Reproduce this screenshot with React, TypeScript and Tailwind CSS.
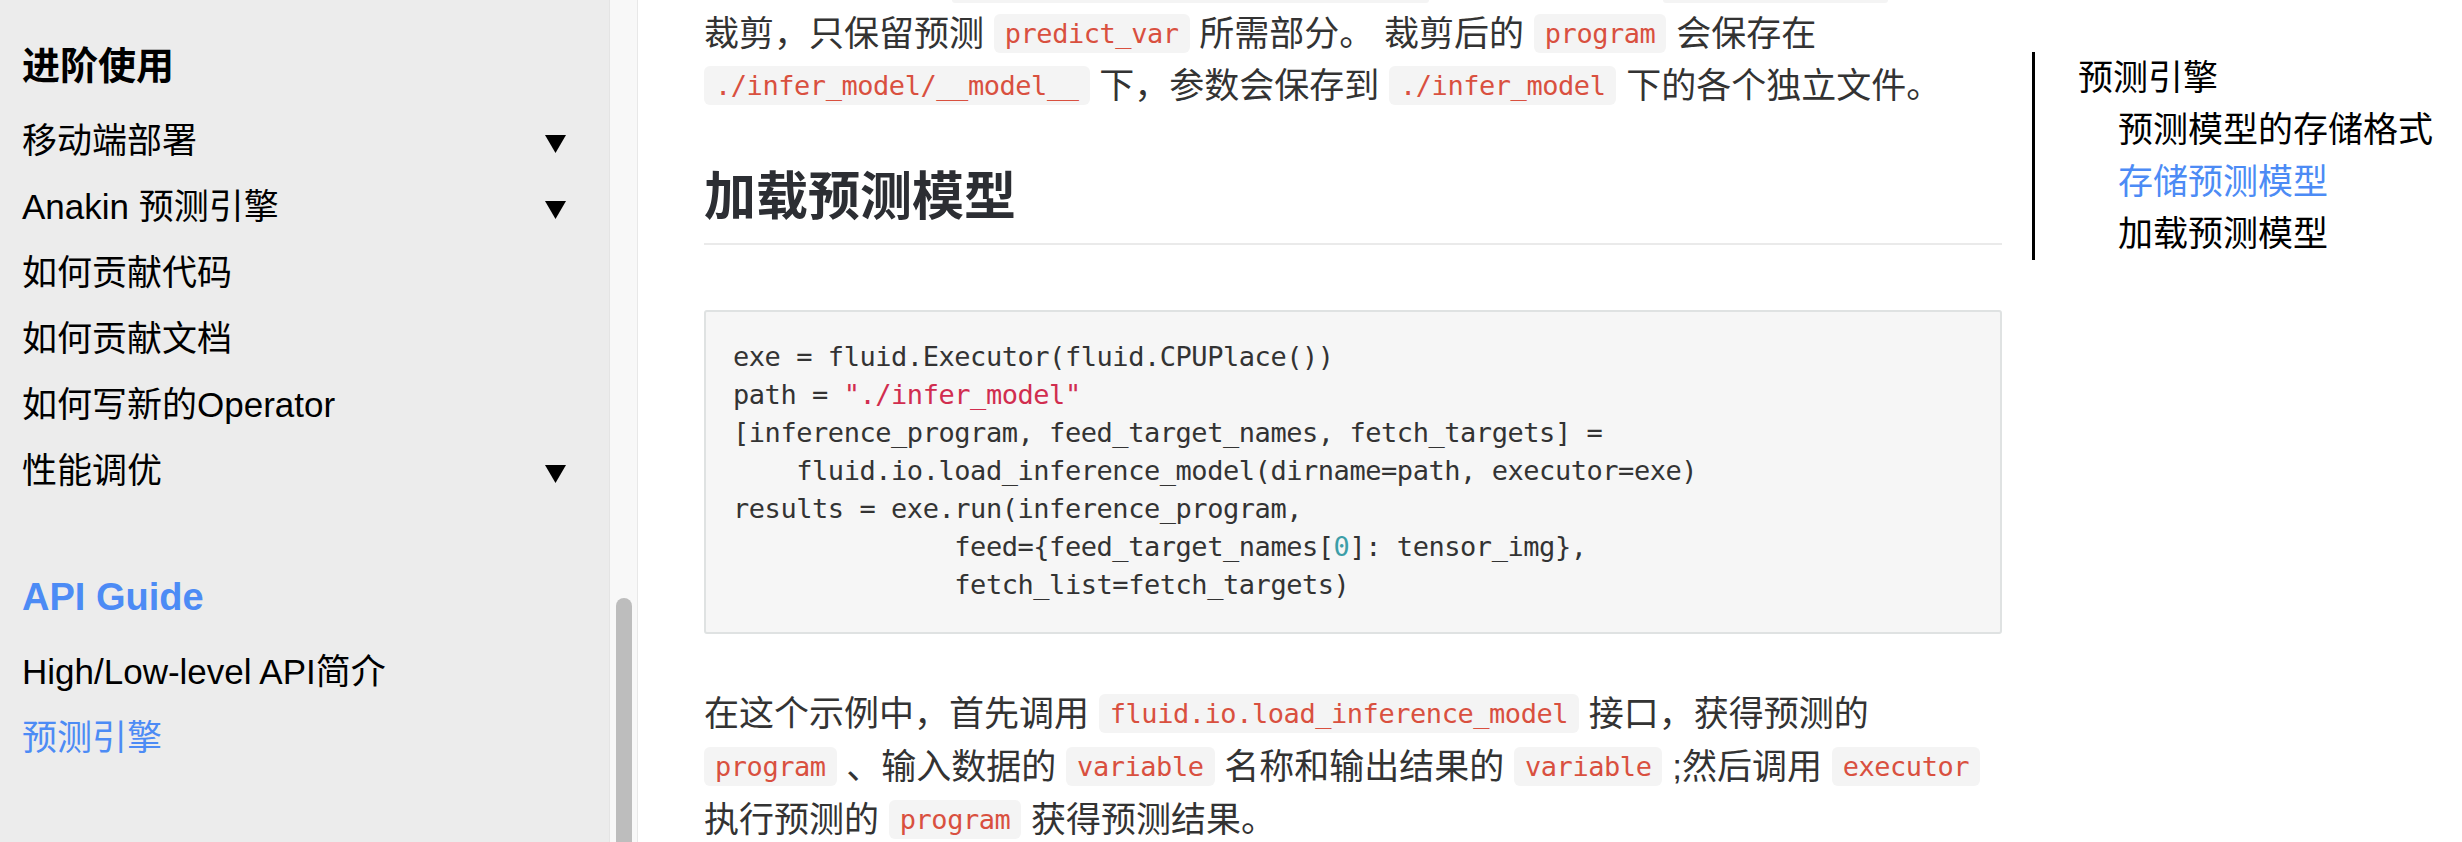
import React from "react";

const Code = ({ children }: { children: React.ReactNode }) => (
  <code className="inline-block rounded-[6px] bg-[#f4f4f4] px-[11px] align-[3px] font-['DejaVu_Sans_Mono',monospace] text-[27px] leading-[39px] tracking-[-0.45px] text-[#d9503f]">
    {children}
  </code>
);

const Arrow = () => (
  <svg width="21" height="18" viewBox="0 0 21 18" className="mt-[5px] shrink-0">
    <polygon points="0,0 21,0 10.5,18" fill="#000" />
  </svg>
);

const navItems: { label: string; arrow?: boolean }[] = [
  { label: "移动端部署", arrow: true },
  { label: "Anakin 预测引擎", arrow: true },
  { label: "如何贡献代码" },
  { label: "如何贡献文档" },
  { label: "如何写新的Operator" },
  { label: "性能调优", arrow: true },
];

export default function App() {
  return (
    <div className="flex h-[842px] w-[2462px] overflow-hidden bg-white font-['Liberation_Sans','Noto_Sans_CJK_SC',sans-serif]">
      {/* Sidebar */}
      <aside className="w-[610px] shrink-0 border-r border-[#e4e4e4] bg-[#ececec] pl-[22px] pr-[43px] pt-[40px] text-black">
        <div className="text-[38px] font-bold leading-[52px]">进阶使用</div>
        <ul className="mt-[16px]">
          {navItems.map((it) => (
            <li key={it.label} className="flex h-[66px] items-center justify-between text-[35px] leading-[66px]">
              <span>{it.label}</span>
              {it.arrow && <Arrow />}
            </li>
          ))}
        </ul>
        <div className="mt-[67px] text-[38px] font-bold leading-[52px] text-[#4c8bf5]">API Guide</div>
        <ul className="mt-[16px]">
          <li className="h-[66px] text-[35px] leading-[66px]">High/Low-level API简介</li>
          <li className="h-[66px] text-[35px] leading-[66px] text-[#4c8bf5]">预测引擎</li>
        </ul>
      </aside>

      {/* Sidebar scrollbar */}
      <div className="flex w-[28px] shrink-0 flex-col border-r border-[#e8e8e8] bg-[#f8f8f8] pl-[6px] pr-[5px] pt-[598px]">
        <div className="flex-1 rounded-t-full bg-[#bdbdbd]" />
      </div>

      {/* Main */}
      <main className="flex flex-1 pl-[66px]">
        <article className="w-[1298px] shrink-0 text-[35px] text-[#333]">
          {/* bottoms of code boxes from the previous (scrolled-off) line */}
          <div className="flex h-[3px]">
            <div className="ml-[248px] w-[477px] rounded-b-[6px] bg-[#f4f4f4]" />
            <div className="ml-[234px] w-[225px] rounded-b-[6px] bg-[#f4f4f4]" />
          </div>

          <div className="mt-[5px] leading-[52px]">
            <div className="whitespace-nowrap">
              裁剪，只保留预测 <Code>predict_var</Code> 所需部分。 裁剪后的 <Code>program</Code> 会保存在
            </div>
            <div className="whitespace-nowrap">
              <Code>./infer_model/__model__</Code> 下，参数会保存到 <Code>./infer_model</Code> 下的各个独立文件。
            </div>
          </div>

          <h2 className="mt-[55px] border-b-2 border-[#eaeaea] pb-[16px] text-[52px] font-bold leading-[60px] text-[#2c2e33]">
            加载预测模型
          </h2>

          <div className="mt-[65px] rounded-[3px] border-2 border-[#dfe2e2] bg-[#f6f6f6] pb-[28px] pl-[27px] pt-[26px]">
            <pre className="font-['DejaVu_Sans_Mono',monospace] text-[27px] leading-[38px] tracking-[-0.45px] text-[#333]">
              {"exe = fluid.Executor(fluid.CPUPlace())\npath = "}
              <span className="text-[#d12d4f]">"./infer_model"</span>
              {"\n[inference_program, feed_target_names, fetch_targets] =\n    fluid.io.load_inference_model(dirname=path, executor=exe)\nresults = exe.run(inference_program,\n              feed={feed_target_names["}
              <span className="text-[#3c9ea8]">0</span>
              {"]: tensor_img},\n              fetch_list=fetch_targets)"}
            </pre>
          </div>

          <div className="mt-[53px] leading-[53px]">
            <div className="whitespace-nowrap">
              在这个示例中，首先调用 <Code>fluid.io.load_inference_model</Code> 接口，获得预测的
            </div>
            <div className="whitespace-nowrap">
              <Code>program</Code> 、输入数据的 <Code>variable</Code> 名称和输出结果的 <Code>variable</Code> ;然后调用 <Code>executor</Code>
            </div>
            <div className="whitespace-nowrap">
              执行预测的 <Code>program</Code> 获得预测结果。
            </div>
          </div>
        </article>

        {/* Table of contents */}
        <nav className="ml-[30px] mt-[52px] self-start border-l-[3px] border-black pl-[43px] text-[35px] leading-[52px] text-black">
          <div>预测引擎</div>
          <div className="pl-[40px]">预测模型的存储格式</div>
          <div className="pl-[40px] text-[#4c8bf5]">存储预测模型</div>
          <div className="pl-[40px]">加载预测模型</div>
        </nav>
      </main>
    </div>
  );
}
